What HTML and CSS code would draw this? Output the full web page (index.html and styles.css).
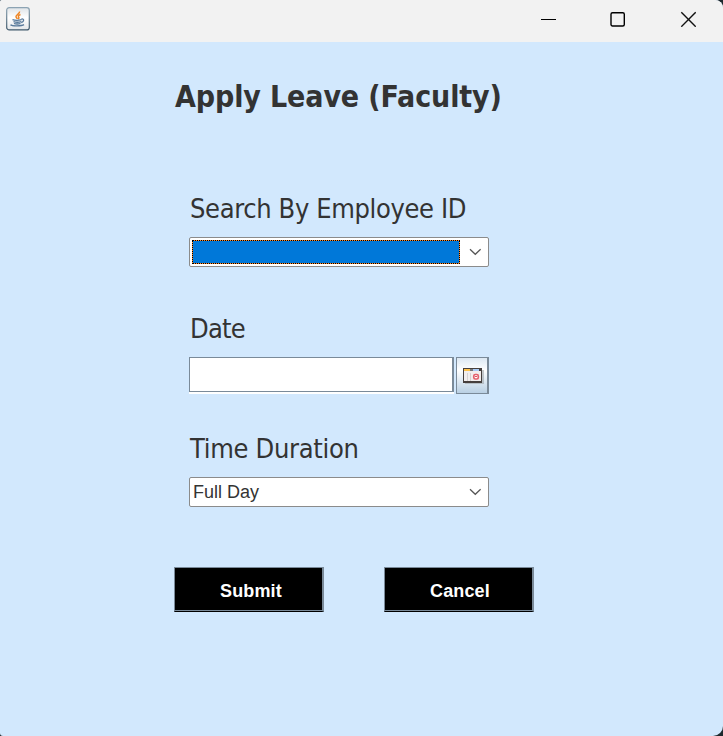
FILE: index.html
```html
<!DOCTYPE html>
<html lang="en">
<head>
<meta charset="utf-8">
<title>Apply Leave (Faculty)</title>
<link rel="stylesheet" href="styles.css">
</head>
<body>
<div class="window">
  <header class="titlebar">
    <svg class="app-icon" width="24" height="24" viewBox="0 0 24 24">
      <defs>
        <linearGradient id="tile" x1="0" y1="0" x2="0" y2="1"><stop offset="0" stop-color="#dfe4e8"/><stop offset=".45" stop-color="#fff"/><stop offset="1" stop-color="#e4e7ea"/></linearGradient>
        <linearGradient id="edge" x1="0" y1="0" x2="0" y2="1"><stop offset="0" stop-color="#8ca3b3"/><stop offset="1" stop-color="#3e586b"/></linearGradient>
      </defs>
      <rect x=".7" y=".7" width="22.6" height="22.2" rx="2.5" fill="url(#tile)" stroke="url(#edge)" stroke-width="1.2"/>
      <path d="M13.5 4.5c.7 2.2-3.8 3.2-3.5 5.2.1 1 1.200 1.500 1.500 2.200M14.500 7.500c-1.800.7-2.500 1.500-1.900 2.500.6.900.3 1.500-.5 2" fill="none" stroke="#ee8524" stroke-width="1.500"/>
      <path d="M6.500 12.700c2.500.7 6.500.6 9 0M7.500 14.700c2.500.7 5.500.6 7.800 0M8 16.500c2 .7 4.500.6 6.500 0M15.500 12c3-.5 2.700 2.500-.2 3.700M4.500 17.800c1.500 1.400 11 1.400 13.500-.2" fill="none" stroke="#57799b" stroke-width="1.300"/>
    </svg>
    <div class="controls">
      <svg width="16" height="16" viewBox="0 0 16 16"><path d="M1 8.500h15" stroke="#000"/></svg>
      <svg width="16" height="16" viewBox="0 0 16 16"><rect x="1" y="1.700" width="13.300" height="13.300" rx="1.500" fill="none" stroke="#000" stroke-width="1.400"/></svg>
      <svg width="16" height="16" viewBox="0 0 16 16"><path d="M1.300 1.300l14.400 14.400M15.700 1.300l-14.400 14.400" stroke="#111" stroke-width="1.400"/></svg>
    </div>
  </header>
  <main class="form">
    <h1 class="title">Apply Leave (Faculty)</h1>
    <div class="field">
      <div class="label label-search">Search By Employee ID</div>
      <div class="combo">
        <div class="combo-value focused"></div>
        <svg class="chevron" width="13" height="8" viewBox="0 0 13 8"><path d="M1 1.200l5.300 5.100 5.300-5.100" fill="none" stroke="#555" stroke-width="1.200"/></svg>
      </div>
    </div>
    <div class="field">
      <div class="label label-date">Date</div>
      <div class="date-row">
        <div class="date-input"></div>
        <div class="date-button">
          <svg width="21" height="17" viewBox="0 0 21 17" shape-rendering="crispEdges">
            <path d="M2 2h19v14H2z" fill="#999ea3" opacity=".55"/>
            <path d="M0 0h19v15H0z" fill="#463f3d"/>
            <path d="M1 1h6v2H1z" fill="#ffc24a"/><path d="M7 1h3v2H7z" fill="#777"/><path d="M10 1h6v2h-6z" fill="#a9cbf6"/>
            <path d="M1 3h17v10H1z" fill="#f2eeee"/>
            <path d="M4 5v8M7 5v8" stroke="#d6d1d1"/>
            <rect x="10.800" y="6.500" width="4.500" height="4.500" rx="1.500" fill="#fff" stroke="#e4606d" stroke-width="1.700" shape-rendering="auto"/>
            <path d="M12 8h2v1h-2z" fill="#df5461"/>
          </svg>
        </div>
      </div>
    </div>
    <div class="field">
      <div class="label label-duration">Time Duration</div>
      <div class="combo">
        <div class="combo-value">Full Day</div>
        <svg class="chevron" width="13" height="8" viewBox="0 0 13 8"><path d="M1 1.200l5.300 5.100 5.300-5.100" fill="none" stroke="#555" stroke-width="1.200"/></svg>
      </div>
    </div>
    <div class="actions">
      <div class="button"><span>Submit</span></div>
      <div class="button"><span>Cancel</span></div>
    </div>
  </main>
</div>
</body>
</html>
```
FILE: styles.css
```css
* { box-sizing: border-box; }
body { margin: 0; background: #1d292d; }
.window {
  width: 723px;
  height: 736px;
  background: #d2e8fd;
  border-radius: 2px 8px 10px 3px;
  overflow: hidden;
}
.titlebar {
  display: flex;
  justify-content: space-between;
  height: 42px;
  padding: 7px 27px 0 6px;
  background: #f2f2f2;
}
.controls { display: flex; gap: 54px; padding-top: 4px; }
.form { padding: 33px 0 0 174px; }
.title, .label {
  font-family: "DejaVu Sans Condensed", "DejaVu Sans", sans-serif;
  font-stretch: condensed;
  color: #333;
  white-space: nowrap;
}
.title {
  height: 44px;
  margin: 0 0 72px 1px;
  font-size: 30px;
  line-height: 44px;
  font-weight: bold;
  letter-spacing: -0.12px;
}
.field { width: 300px; height: 120px; margin-left: 15px; }
.label {
  height: 46px;
  padding-left: 1px;
  font-size: 27px;
  line-height: 35px;
}
.label-search { letter-spacing: -0.36px; }
.label-date { letter-spacing: -0.8px; }
.label-duration { letter-spacing: -0.3px; }
.combo {
  display: flex;
  align-items: center;
  justify-content: space-between;
  height: 30px;
  padding: 2px 6px 2px 2px;
  background: #fff;
  border: 1px solid #8b8b8b;
  border-radius: 2px;
}
.combo-value {
  padding-left: 1px;
  font: 18px/24px "Liberation Sans", sans-serif;
  color: #333;
}
.focused {
  width: 268px;
  height: 24px;
  border: 1px dotted #000;
  background:
    linear-gradient(#0078d9, #0078d9) padding-box,
    linear-gradient(#ff8726, #ff8726) border-box;
}
.date-row { display: flex; gap: 2px; height: 37px; }
.date-input {
  width: 265px;
  height: 35px;
  border: 1px solid #7a8a99;
  border-right-width: 2px;
  background: #fff;
  box-shadow: 0 2px #fff;
}
.date-button {
  width: 33px;
  padding: 10px 0 0 6px;
  border: 1px solid #7a8a99;
  border-right-width: 2px;
  background: linear-gradient(#dce8f3 0%, #fff 35%, #b9d0e4 100%);
}
.actions { display: flex; gap: 60px; padding-top: 16px; }
.button {
  width: 150px;
  height: 45px;
  padding-left: 45px;
  border: 1px solid #7a8a99;
  border-right-width: 2px;
  border-bottom-color: #000;
  background: #000;
  box-shadow: inset 0 -1px #7a8a99;
  color: #fff;
  font: bold 18px/46px "Liberation Sans", sans-serif;
  letter-spacing: 0.15px;
}
```
